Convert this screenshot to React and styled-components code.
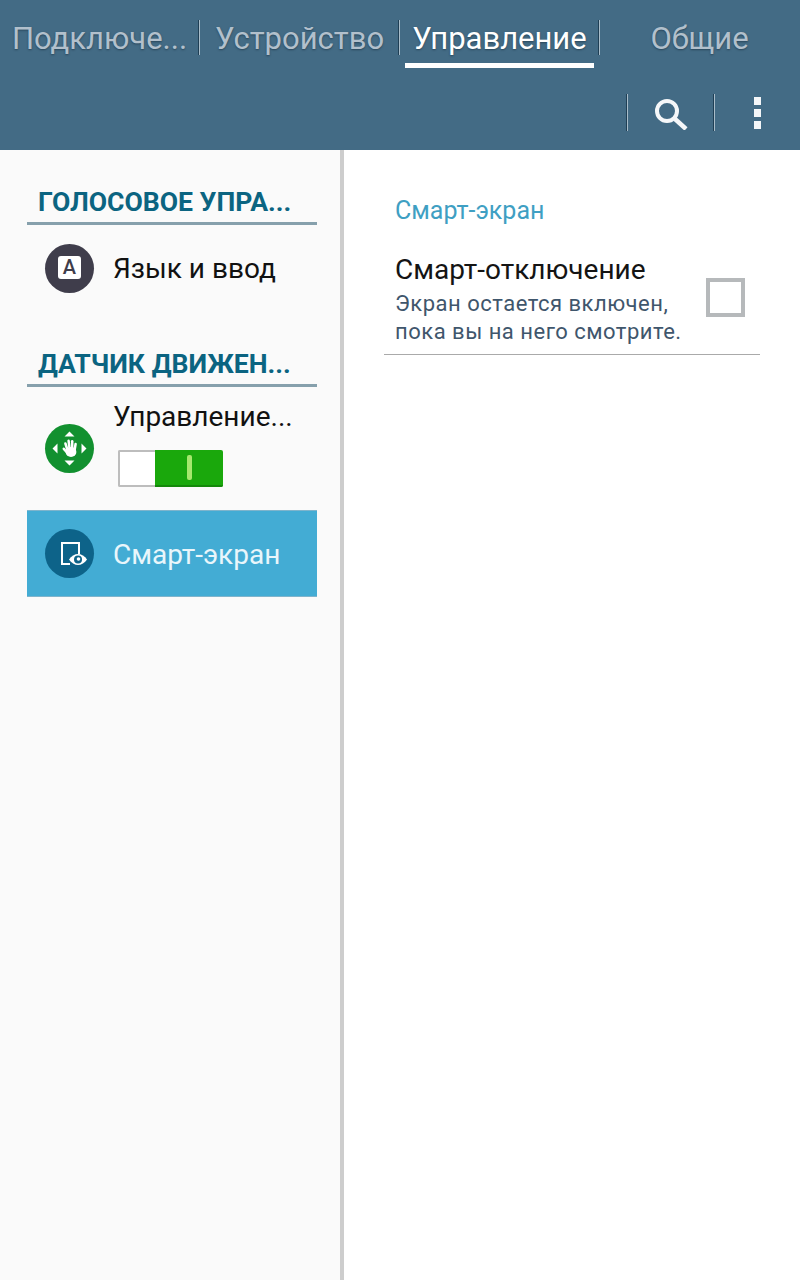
import React from "react";
import styled, { createGlobalStyle } from "styled-components";

const Global = createGlobalStyle`
  html, body { margin: 0; padding: 0; background: #fff; }
  * { box-sizing: border-box; }
`;

const Page = styled.div`
  width: 800px;
  height: 1280px;
  display: flex;
  flex-direction: column;
  overflow: hidden;
  font-family: Roboto, "Liberation Sans", sans-serif;
`;

const Header = styled.header`
  height: 150px;
  flex: none;
  background: #436b85;
`;

const Tabs = styled.nav`
  display: flex;
  height: 68px;
`;

const Tab = styled.div`
  width: 200px;
  height: 68px;
  padding: 0 6px 0 5px;
  position: relative;
  &:not(:last-child)::after {
    content: "";
    position: absolute;
    right: 0;
    top: 20px;
    width: 1px;
    height: 35px;
    background: #a9bdca;
    box-shadow: -1px 0 0 #1f3f55;
  }
`;

const TabLabel = styled.div`
  height: 68px;
  padding-top: 20px;
  font-size: 31px;
  line-height: 38px;
  white-space: nowrap;
  text-align: center;
  color: ${(p) => (p.$active ? "#ffffff" : "#b2c0cc")};
  text-shadow: 0 1px 2px rgba(20, 40, 55, 0.55);
  border-bottom: 5px solid ${(p) => (p.$active ? "#ffffff" : "transparent")};
`;

const Actions = styled.div`
  height: 82px;
  display: flex;
  justify-content: flex-end;
  padding-top: 26px;
`;

const ActionSlot = styled.div`
  width: ${(p) => p.$w}px;
  height: 37px;
  display: flex;
  align-items: center;
  justify-content: center;
  border-left: 1px solid #a9bdca;
  box-shadow: -1px 0 0 #1f3f55;
`;

const Dots = styled.div`
  display: flex;
  flex-direction: column;
  gap: 4px;
  margin-top: 1px;
`;

const Dot = styled.span`
  width: 7px;
  height: 8px;
  background: #f4f6f8;
`;

const Body = styled.main`
  flex: 1;
  display: flex;
`;

const Side = styled.aside`
  width: 344px;
  background: #fafafa;
  border-right: 4px solid #cdcdcd;
  padding: 37px 23px 0 27px;
`;

const SideHead = styled.h2`
  margin: 0;
  height: 38px;
  padding-left: 11px;
  font-size: 26.6px;
  line-height: 30px;
  font-weight: 700;
  color: #0b6481;
  white-space: nowrap;
  border-bottom: 3px solid #86a0ac;
`;

const Row = styled.div`
  display: flex;
  align-items: center;
  gap: 19px;
  height: ${(p) => p.$h}px;
  padding-left: 18px;
  margin-bottom: ${(p) => p.$mb || 0}px;
  background: ${(p) => (p.$selected ? "#43acd4" : "transparent")};
  color: ${(p) => (p.$selected ? "#e9f6fb" : "#111")};
  border-top: ${(p) => (p.$selected ? "1px solid #7fb4cc" : "none")};
  border-bottom: ${(p) => (p.$selected ? "1px solid #7fb4cc" : "none")};
`;

const Circle = styled.div`
  width: 49px;
  height: 49px;
  flex: none;
  border-radius: 50%;
  background: ${(p) => p.$bg};
  display: flex;
  align-items: center;
  justify-content: center;
`;

const KeyCap = styled.span`
  width: 23px;
  height: 23px;
  margin-top: -2px;
  border-radius: 3px;
  background: #fff;
  color: #3f3d4b;
  font-size: 20px;
  font-weight: 500;
  line-height: 23px;
  text-align: center;
`;

const RowText = styled.div`
  padding-top: 2px;
  font-size: 28px;
  line-height: 34px;
  white-space: nowrap;
`;

const Stack = styled.div`
  display: flex;
  flex-direction: column;
  gap: 16px;
  margin-top: -12px;
`;

const Switch = styled.div`
  width: 105px;
  height: 37px;
  margin-left: 5px;
  display: flex;
  border-radius: 2px;
  overflow: hidden;
`;

const SwitchOff = styled.div`
  width: 37px;
  background: #fff;
  border: 2px solid #bdbdbd;
  border-right: none;
`;

const SwitchOn = styled.div`
  flex: 1;
  background: #1aa80c;
  border-bottom: 2px solid #14880a;
  display: flex;
  align-items: center;
  justify-content: center;
`;

const SwitchGrip = styled.span`
  width: 5px;
  height: 25px;
  border-radius: 2px;
  background: #a6e86e;
`;

const Content = styled.section`
  flex: 1;
  background: #fff;
  padding: 44px 40px 0 40px;
`;

const ContentHead = styled.div`
  padding-left: 11px;
  font-size: 25px;
  line-height: 34px;
  color: #3f9fc3;
`;

const Option = styled.div`
  margin-top: 26px;
  padding: 0 15px 8px 11px;
  display: flex;
  align-items: flex-start;
  justify-content: space-between;
  border-bottom: 1px solid #aaaaaa;
`;

const OptionTitle = styled.div`
  font-size: 28px;
  line-height: 32px;
  color: #141414;
`;

const OptionSub = styled.div`
  margin-top: 4px;
  font-size: 22px;
  line-height: 28px;
  color: #3f566c;
  letter-spacing: 0.5px;
  white-space: nowrap;
`;

const Check = styled.div`
  width: 39px;
  height: 39px;
  border: 4px solid #b6b9bb;
  margin-top: 24px;
`;

function SearchIcon() {
  return (
    <svg width="34" height="34" viewBox="0 0 34 34" fill="none">
      <circle cx="13" cy="15" r="10" stroke="#f5f7f9" strokeWidth="4" />
      <path d="M21 23 L32 33" stroke="#f5f7f9" strokeWidth="4.5" />
    </svg>
  );
}

function MotionIcon() {
  return (
    <svg width="49" height="49" viewBox="0 0 49 49" fill="#fff">
      <path d="M24.5 7.5 L29.5 12.5 H19.5 Z M24.5 41.5 L29.5 36.5 H19.5 Z M7.5 24.5 L12.5 19.5 V29.5 Z M41.5 24.5 L36.5 19.5 V29.5 Z" />
      <ellipse cx="26" cy="28" rx="5.4" ry="5" />
      <g stroke="#fff" strokeWidth="2.5" strokeLinecap="round">
        <path d="M22.5 26 L20.4 19.5" />
        <path d="M24.6 25 L23.6 16.8" />
        <path d="M27.2 25 L27.2 17.2" />
        <path d="M29.6 26 L30.6 20" />
        <path d="M22.5 29 L18.8 24.8" />
      </g>
    </svg>
  );
}

function SmartScreenIcon() {
  return (
    <svg width="49" height="49" viewBox="0 0 49 49" fill="none">
      <path d="M25 35 H17 V14 H34 V25" stroke="#fff" strokeWidth="2" />
      <path d="M24 30.5 C26 27 30 25 33 25 C36 25 40 27 42 30.5 C40 34 36 36 33 36 C30 36 26 34 24 30.5 Z" fill="#fff" />
      <circle cx="33" cy="30.5" r="4" fill="#0d6389" />
      <circle cx="33.5" cy="30" r="1.8" fill="#fff" />
    </svg>
  );
}

export default function App() {
  return (
    <Page>
      <Global />
      <Header>
        <Tabs>
          <Tab><TabLabel>Подключе...</TabLabel></Tab>
          <Tab><TabLabel>Устройство</TabLabel></Tab>
          <Tab><TabLabel $active>Управление</TabLabel></Tab>
          <Tab><TabLabel>Общие</TabLabel></Tab>
        </Tabs>
        <Actions>
          <ActionSlot $w={87}><SearchIcon /></ActionSlot>
          <ActionSlot $w={86}>
            <Dots><Dot /><Dot /><Dot /></Dots>
          </ActionSlot>
        </Actions>
      </Header>
      <Body>
        <Side>
          <SideHead>ГОЛОСОВОЕ УПРА...</SideHead>
          <Row $h={86} $mb={38}>
            <Circle $bg="#3f3d4b"><KeyCap>A</KeyCap></Circle>
            <RowText>Язык и ввод</RowText>
          </Row>
          <SideHead>ДАТЧИК ДВИЖЕН...</SideHead>
          <Row $h={123}>
            <Circle $bg="#12902f"><MotionIcon /></Circle>
            <Stack>
              <RowText>Управление...</RowText>
              <Switch>
                <SwitchOff />
                <SwitchOn><SwitchGrip /></SwitchOn>
              </Switch>
            </Stack>
          </Row>
          <Row $h={87} $selected>
            <Circle $bg="#0d6389"><SmartScreenIcon /></Circle>
            <RowText>Смарт-экран</RowText>
          </Row>
        </Side>
        <Content>
          <ContentHead>Смарт-экран</ContentHead>
          <Option>
            <div>
              <OptionTitle>Смарт-отключение</OptionTitle>
              <OptionSub>Экран остается включен,<br />пока вы на него смотрите.</OptionSub>
            </div>
            <Check />
          </Option>
        </Content>
      </Body>
    </Page>
  );
}
